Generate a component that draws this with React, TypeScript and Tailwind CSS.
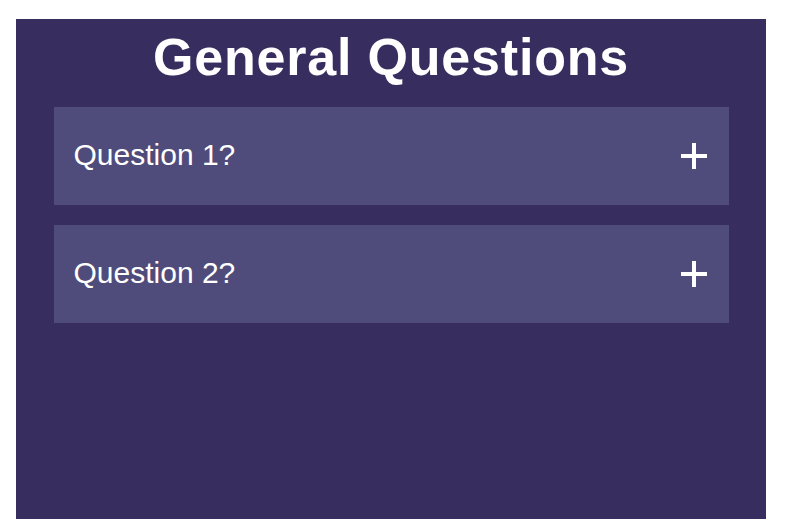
export default function App() {
  const items = ["Question 1?", "Question 2?"];
  return (
    <div className="min-h-[532px] bg-white pt-[19px] pl-[16px]" style={{ fontFamily: '"Liberation Sans", Arial, sans-serif' }}>
      <div className="w-[750px] h-[500px] bg-[#372e5f] pt-[12px] flex flex-col items-center">
        <h1 className="text-[52px] leading-[52px] font-bold text-white tracking-[0.8px] m-0">General Questions</h1>
        <div className="mt-[24px] w-[675px] flex flex-col gap-[20px]">
          {items.map((q) => (
            <div key={q} className="h-[98px] bg-[#4f4c7b] flex items-center justify-between pl-[20px] pr-[22px]">
              <span className="text-[30px] leading-[30px] text-white pb-[2px]">{q}</span>
              <svg width="26" height="26" viewBox="0 0 26 26">
                <rect x="11" y="0" width="4" height="26" fill="white" />
                <rect x="0" y="11" width="26" height="4" fill="white" />
              </svg>
            </div>
          ))}
        </div>
      </div>
    </div>
  );
}
